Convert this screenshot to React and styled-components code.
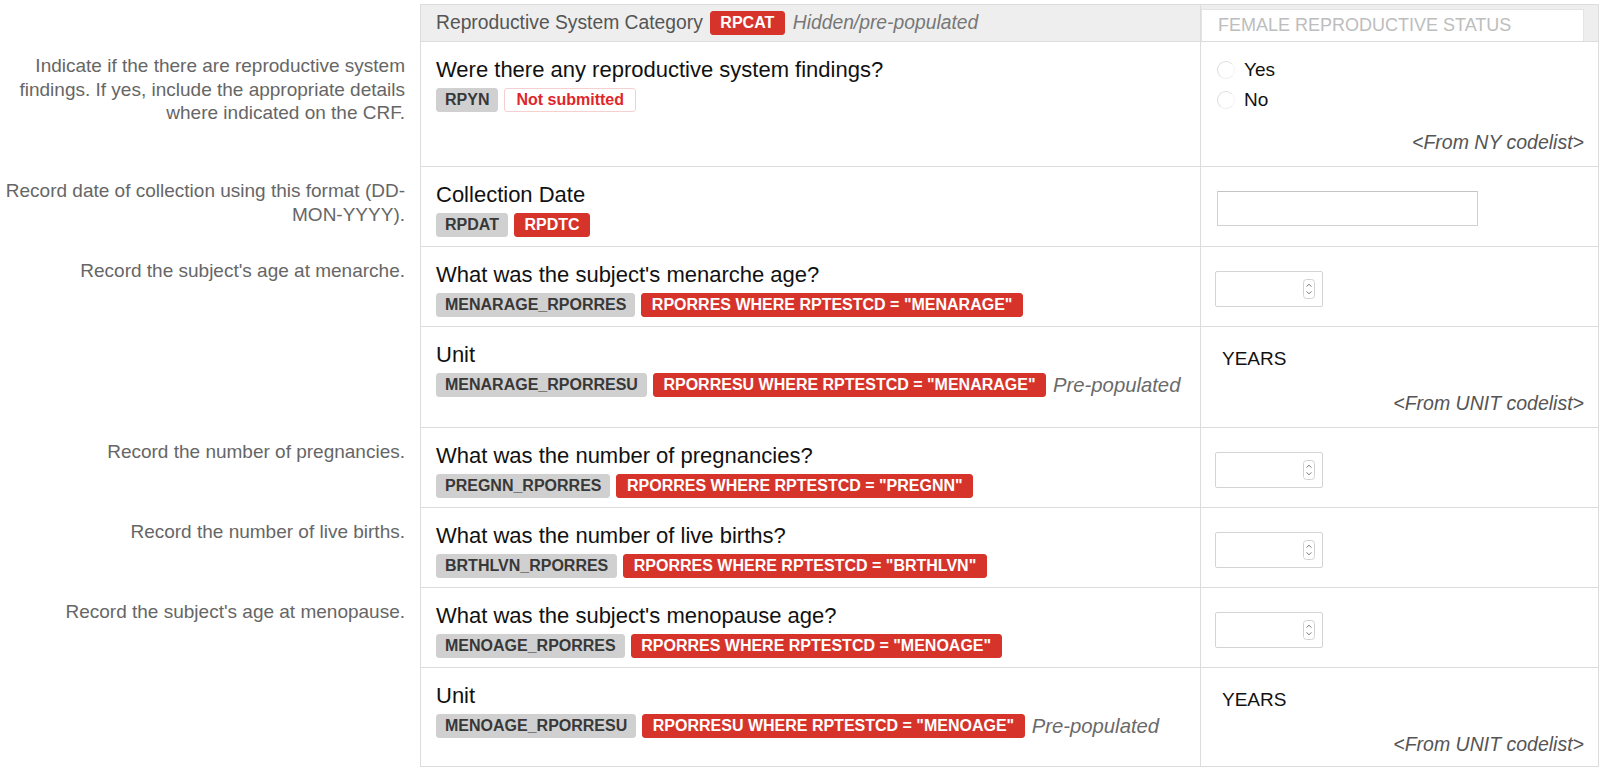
import React from 'react';
import styled, { createGlobalStyle } from 'styled-components';

const GlobalStyle = createGlobalStyle`
  html, body { margin: 0; padding: 0; background: #ffffff; }
  body { font-family: "Liberation Sans", Arial, sans-serif; color: #111; }
  * { box-sizing: border-box; }
`;

const Page = styled.div`
  width: 1607px;
  padding: 4px 8px 0 0;
`;

const Row = styled.div`
  display: grid;
  grid-template-columns: 420px 780px 1fr;
  align-items: stretch;
`;

const Desc = styled.div`
  padding: 12px 15px 0 0;
  text-align: right;
  font-size: 19px;
  line-height: 23.5px;
  color: #666;
`;

const QuestionCell = styled.div`
  border-left: 1px solid #dcdcdc;
  border-bottom: 1px solid #dcdcdc;
  padding: 14px 15px 9px 15px;
  display: flex;
  flex-direction: column;
`;

const AnswerCell = styled.div`
  border-left: 1px solid #dcdcdc;
  border-right: 1px solid #dcdcdc;
  border-bottom: 1px solid #dcdcdc;
  padding: 14px 14px ${(p) => p.$bottom || 10}px 16px;
  display: flex;
  flex-direction: column;
  justify-content: ${(p) => (p.$center ? 'center' : 'flex-start')};
`;

const HeaderLabel = styled.div`
  height: 38px;
  background: #eeeeee;
  border-top: 1px solid #dcdcdc;
  border-left: 1px solid #dcdcdc;
  border-bottom: 1px solid #dcdcdc;
  padding: 0 15px;
  display: flex;
  align-items: center;
  gap: 7px;
  font-size: 19.3px;
  color: #555;
`;

const HeaderAnswer = styled.div`
  height: 38px;
  background: #eeeeee;
  border: 1px solid #dcdcdc;
  padding: 4px 14px 0 0;
  display: flex;
`;

const StatusInput = styled.input`
  flex: 1;
  min-width: 0;
  height: 32px;
  border: 1px solid #e4e4e4;
  border-bottom: none;
  background: #ffffff;
  padding: 0 0 0 16px;
  font-family: inherit;
  font-size: 18px;
  color: #333;
  outline: none;
  &::placeholder { color: #bdbdbd; }
`;

const Question = styled.div`
  font-size: 22px;
  line-height: 28px;
  color: #111;
`;

const BadgeRow = styled.div`
  margin-top: 4px;
  display: flex;
  align-items: center;
  gap: 6px;
`;

const badgeColors = {
  gray: 'background:#d0d0d0;color:#383838;border:1px solid #d0d0d0;padding:0 8px;',
  red: 'background:#d6342b;color:#ffffff;border:1px solid #d6342b;padding:0 9.5px;',
  outline: 'background:#ffffff;color:#e0262b;border:1px solid #f6d0d0;padding:0 11px;',
};

const Badge = styled.span`
  display: inline-flex;
  align-items: center;
  height: 24px;
  border-radius: 3px;
  font-size: 16px;
  font-weight: 700;
  white-space: nowrap;
  ${(p) => badgeColors[p.$variant]}
`;

const Note = styled.span`
  font-style: italic;
  font-size: ${(p) => p.$size || 20.3}px;
  color: ${(p) => p.$color || '#6a6a6a'};
  margin-left: 1px;
  white-space: nowrap;
`;

const RadioGroup = styled.div`
  margin-top: -1px;
  display: flex;
  flex-direction: column;
`;

const RadioLine = styled.label`
  display: flex;
  align-items: center;
  gap: 9px;
  height: 30px;
  font-size: 19px;
  color: #111;
`;

const RadioDot = styled.span`
  width: 18px;
  height: 18px;
  border-radius: 50%;
  border: 1px solid #dddddd;
  border-right-color: #f4f4f4;
  border-bottom-color: #ececec;
  background: #ffffff;
`;

const Codelist = styled.div`
  margin-top: ${(p) => p.$gap || 16}px;
  line-height: 27px;
  font-size: 19.5px;
  font-style: italic;
  color: #555;
  text-align: right;
`;

const ValueText = styled.div`
  height: 34px;
  padding-top: 2px;
  line-height: 32px;
  padding-left: 5px;
  font-size: 19px;
  color: #111;
`;

const DateBox = styled.div`
  width: 261px;
  height: 35px;
  border: 1px solid #d2d2d2;
  border-top-color: #c4c4c4;
  background: #fff;
`;

const NumberBox = styled.div`
  width: 108px;
  height: 36px;
  margin-left: -2px;
  border: 1px solid #d4d4d4;
  border-radius: 2px;
  background: #fff;
  display: flex;
  align-items: center;
  justify-content: flex-end;
  padding-right: 7px;
`;

const Stepper = () => (
  <svg width="12" height="20" viewBox="0 0 12 20">
    <rect x="0.5" y="0.5" width="11" height="19" rx="3" fill="#fff" stroke="#d2d2d2" />
    <path d="M3.6 7.6 L6 5.2 L8.4 7.6" fill="none" stroke="#707070" strokeWidth="1" />
    <path d="M3.6 12.4 L6 14.8 L8.4 12.4" fill="none" stroke="#707070" strokeWidth="1" />
  </svg>
);

const rows = [
  {
    desc: 'Indicate if the there are reproductive system findings. If yes, include the appropriate details where indicated on the CRF.',
    question: 'Were there any reproductive system findings?',
    badges: [
      { t: 'RPYN', v: 'gray' },
      { t: 'Not submitted', v: 'outline' },
    ],
    answer: { type: 'radio', options: ['Yes', 'No'], codelist: '<From NY codelist>' },
  },
  {
    desc: 'Record date of collection using this format (DD-MON-YYYY).',
    question: 'Collection Date',
    badges: [
      { t: 'RPDAT', v: 'gray' },
      { t: 'RPDTC', v: 'red' },
    ],
    answer: { type: 'date' },
  },
  {
    desc: "Record the subject's age at menarche.",
    question: "What was the subject's menarche age?",
    badges: [
      { t: 'MENARAGE_RPORRES', v: 'gray' },
      { t: 'RPORRES WHERE RPTESTCD = "MENARAGE"', v: 'red' },
    ],
    answer: { type: 'number' },
  },
  {
    desc: '',
    question: 'Unit',
    badges: [
      { t: 'MENARAGE_RPORRESU', v: 'gray' },
      { t: 'RPORRESU WHERE RPTESTCD = "MENARAGE"', v: 'red' },
    ],
    note: 'Pre-populated',
    answer: { type: 'value', value: 'YEARS', codelist: '<From UNIT codelist>', bottom: 10 },
  },
  {
    desc: 'Record the number of pregnancies.',
    question: 'What was the number of pregnancies?',
    badges: [
      { t: 'PREGNN_RPORRES', v: 'gray' },
      { t: 'RPORRES WHERE RPTESTCD = "PREGNN"', v: 'red' },
    ],
    answer: { type: 'number' },
  },
  {
    desc: 'Record the number of live births.',
    question: 'What was the number of live births?',
    badges: [
      { t: 'BRTHLVN_RPORRES', v: 'gray' },
      { t: 'RPORRES WHERE RPTESTCD = "BRTHLVN"', v: 'red' },
    ],
    answer: { type: 'number' },
  },
  {
    desc: "Record the subject's age at menopause.",
    question: "What was the subject's menopause age?",
    badges: [
      { t: 'MENOAGE_RPORRES', v: 'gray' },
      { t: 'RPORRES WHERE RPTESTCD = "MENOAGE"', v: 'red' },
    ],
    answer: { type: 'number' },
  },
  {
    desc: '',
    question: 'Unit',
    badges: [
      { t: 'MENOAGE_RPORRESU', v: 'gray' },
      { t: 'RPORRESU WHERE RPTESTCD = "MENOAGE"', v: 'red' },
    ],
    note: 'Pre-populated',
    answer: { type: 'value', value: 'YEARS', codelist: '<From UNIT codelist>', bottom: 8 },
  },
];

function Answer({ a }) {
  if (a.type === 'radio') {
    return (
      <AnswerCell>
        <RadioGroup>
          {a.options.map((o) => (
            <RadioLine key={o}>
              <RadioDot />
              {o}
            </RadioLine>
          ))}
        </RadioGroup>
        <Codelist $gap={14}>{a.codelist}</Codelist>
      </AnswerCell>
    );
  }
  if (a.type === 'date') {
    return (
      <AnswerCell $center>
        <DateBox />
      </AnswerCell>
    );
  }
  if (a.type === 'number') {
    return (
      <AnswerCell $center>
        <NumberBox>
          <Stepper />
        </NumberBox>
      </AnswerCell>
    );
  }
  return (
    <AnswerCell $bottom={a.bottom}>
      <ValueText>{a.value}</ValueText>
      <Codelist $gap={15}>{a.codelist}</Codelist>
    </AnswerCell>
  );
}

export default function App() {
  return (
    <>
      <GlobalStyle />
      <Page>
        <Row>
          <Desc />
          <HeaderLabel>
            Reproductive System Category
            <Badge $variant="red">RPCAT</Badge>
            <Note $size={19.3} $color="#777">Hidden/pre-populated</Note>
          </HeaderLabel>
          <HeaderAnswer>
            <StatusInput placeholder="FEMALE REPRODUCTIVE STATUS" readOnly />
          </HeaderAnswer>
        </Row>
        {rows.map((r, i) => (
          <Row key={i}>
            <Desc>{r.desc}</Desc>
            <QuestionCell>
              <Question>{r.question}</Question>
              <BadgeRow>
                {r.badges.map((b) => (
                  <Badge key={b.t} $variant={b.v}>
                    {b.t}
                  </Badge>
                ))}
                {r.note && <Note>{r.note}</Note>}
              </BadgeRow>
            </QuestionCell>
            <Answer a={r.answer} />
          </Row>
        ))}
      </Page>
    </>
  );
}
